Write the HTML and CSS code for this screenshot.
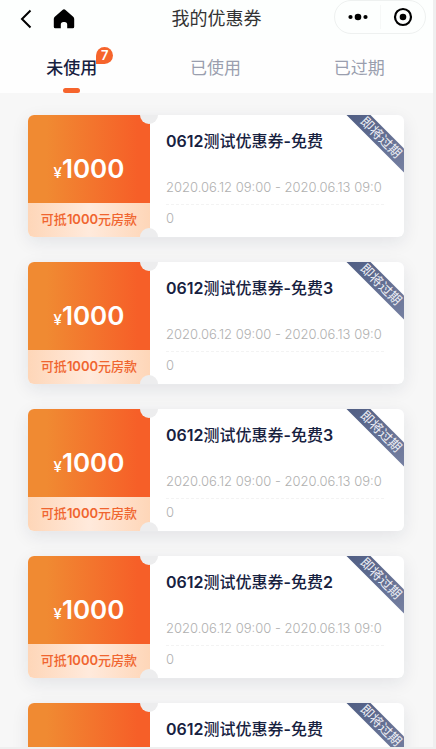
FILE: index.html
```html
<!DOCTYPE html>
<html lang="zh-CN">
<head>
<meta charset="utf-8">
<meta name="viewport" content="width=device-width, initial-scale=1">
<title>我的优惠券</title>
<link rel="stylesheet" href="styles.css">
</head>
<body>
<div class="app">
  <header class="bar">
    <div class="bar-side">
      <button class="icon-btn" type="button" aria-label="返回">
        <svg width="12" height="20" viewBox="0 0 12 20" fill="none" stroke="#000" stroke-width="2"><path d="M10.500 1.500 2 10l8.500 8.500"/></svg>
      </button>
      <button class="icon-btn" type="button" aria-label="首页">
        <svg width="22" height="20" viewBox="0 0 22 20"><path d="M9.500 1a2.200 2.200 0 0 1 3 0l7.700 6.800c.7.6 1 1.300 1 2.200v7.700a1.500 1.500 0 0 1-1.500 1.500h-5.500v-3.600a2.700 2.700 0 0 0-2.700-2.700h-1a2.700 2.700 0 0 0-2.700 2.700v3.600H2.300a1.500 1.500 0 0 1-1.500-1.500V10c0-.9.300-1.600 1-2.200z"/></svg>
      </button>
    </div>
    <h1 class="bar-title">我的优惠券</h1>
    <div class="bar-side bar-end">
      <div class="capsule">
        <button class="icon-btn capsule-btn" type="button" aria-label="更多">
          <svg width="20" height="8" viewBox="0 0 20 8"><circle cx="2.500" cy="4" r="2.100"/><circle cx="10" cy="4" r="3.300"/><circle cx="17.500" cy="4" r="2.100"/></svg>
        </button>
        <button class="icon-btn capsule-btn" type="button" aria-label="关闭">
          <svg width="20" height="20" viewBox="0 0 20 20"><circle cx="10" cy="10" r="8" fill="none" stroke="#000" stroke-width="2.200"/><circle cx="10" cy="10" r="3.300"/></svg>
        </button>
      </div>
    </div>
  </header>
  <nav class="tabs">
    <a class="tab active" href="#unused"><span class="tab-label">未使用<span class="badge">7</span></span></a>
    <a class="tab" href="#used"><span class="tab-label">已使用</span></a>
    <a class="tab" href="#expired"><span class="tab-label">已过期</span></a>
  </nav>
  <main class="list">
    <article class="coupon">
      <div class="value">
        <p class="amount"><span class="yen">¥</span>1000</p>
        <p class="usage">可抵<b>1000</b>元房款</p>
      </div>
      <div class="info">
        <h2 class="name"><b>0612</b>测试优惠券<b>-</b>免费</h2>
        <p class="date">2020.06.12 09:00 - 2020.06.13 09:0</p>
        <p class="note">0</p>
      </div>
      <span class="ribbon">即将过期</span>
    </article>
    <article class="coupon">
      <div class="value">
        <p class="amount"><span class="yen">¥</span>1000</p>
        <p class="usage">可抵<b>1000</b>元房款</p>
      </div>
      <div class="info">
        <h2 class="name"><b>0612</b>测试优惠券<b>-</b>免费<b>3</b></h2>
        <p class="date">2020.06.12 09:00 - 2020.06.13 09:0</p>
        <p class="note">0</p>
      </div>
      <span class="ribbon">即将过期</span>
    </article>
    <article class="coupon">
      <div class="value">
        <p class="amount"><span class="yen">¥</span>1000</p>
        <p class="usage">可抵<b>1000</b>元房款</p>
      </div>
      <div class="info">
        <h2 class="name"><b>0612</b>测试优惠券<b>-</b>免费<b>3</b></h2>
        <p class="date">2020.06.12 09:00 - 2020.06.13 09:0</p>
        <p class="note">0</p>
      </div>
      <span class="ribbon">即将过期</span>
    </article>
    <article class="coupon">
      <div class="value">
        <p class="amount"><span class="yen">¥</span>1000</p>
        <p class="usage">可抵<b>1000</b>元房款</p>
      </div>
      <div class="info">
        <h2 class="name"><b>0612</b>测试优惠券<b>-</b>免费<b>2</b></h2>
        <p class="date">2020.06.12 09:00 - 2020.06.13 09:0</p>
        <p class="note">0</p>
      </div>
      <span class="ribbon">即将过期</span>
    </article>
    <article class="coupon">
      <div class="value">
        <p class="amount"><span class="yen">¥</span>1000</p>
        <p class="usage">可抵<b>1000</b>元房款</p>
      </div>
      <div class="info">
        <h2 class="name"><b>0612</b>测试优惠券<b>-</b>免费</h2>
        <p class="date">2020.06.12 09:00 - 2020.06.13 09:0</p>
        <p class="note">0</p>
      </div>
      <span class="ribbon">即将过期</span>
    </article>
  </main>
</div>
</body>
</html>
```
FILE: styles.css
```css
* {
  box-sizing: border-box;
}

body,
h1,
h2,
p {
  margin: 0;
}

body {
  font-family: Inter, "Noto Sans CJK SC", sans-serif;
  background: #efefef;
}

.app {
  display: flex;
  flex-direction: column;
  height: 100vh;
  border: solid #efefef;
  border-width: 0 3px 2px 0;
  background: #f7f7f7;
}

/* Title bar */
.bar {
  display: flex;
  align-items: center;
  height: 40px;
  padding: 0 20px 2px;
  background: #fdfffe;
}

.bar-side {
  display: flex;
  flex: 1;
  align-items: center;
  gap: 21px;
}

.bar-end {
  justify-content: flex-end;
  align-self: flex-start;
}

.bar-title {
  font-size: 18px;
  font-weight: 400;
  line-height: 24px;
  color: #333;
}

.icon-btn {
  display: flex;
  align-items: center;
  justify-content: center;
  padding: 0;
  border: 0;
  background: none;
}

.capsule {
  display: flex;
  align-items: center;
  height: 34px;
  margin-right: -13px;
  border: 1px solid #eef1f0;
  border-radius: 17px;
}

.capsule-btn {
  width: 45px;
  height: 24px;
}

.capsule-btn + .capsule-btn {
  border-left: 1px solid #f6f8f7;
}

/* Tabs */
.tabs {
  display: flex;
  flex: none;
  height: 53px;
  padding-right: 2px;
  background: #fefefe;
}

.tab {
  display: flex;
  flex: 1;
  flex-direction: column;
  align-items: center;
  justify-content: space-between;
  padding-top: 16px;
  font-size: 17px;
  line-height: 24px;
  color: #9a9eae;
  text-decoration: none;
}

.tab-label {
  position: relative;
}

.tab.active {
  font-weight: 500;
  color: #17213f;
}

.tab.active::after {
  width: 17px;
  height: 5px;
  border-radius: 3px;
  background: #f6642c;
  content: "";
}

.badge {
  position: absolute;
  top: -9px;
  left: 50px;
  width: 17px;
  height: 17px;
  border-radius: 9px 9px 9px 0;
  background: #f6642c;
  color: #fff;
  font-size: 13px;
  font-weight: 600;
  line-height: 17px;
  text-align: center;
}

/* Coupons */
.list {
  display: flex;
  flex: 1;
  flex-direction: column;
  gap: 25px;
  min-height: 0;
  padding: 22px 29px 22px 28px;
  overflow-y: auto;
  scrollbar-width: none;
}

.coupon {
  position: relative;
  display: flex;
  flex: none;
  height: 122px;
  border-radius: 6px;
  background: #fff;
  box-shadow: 0 5px 18px rgba(23, 33, 63, 0.09);
  overflow: hidden;
}

.coupon::before,
.coupon::after {
  position: absolute;
  left: 112px;
  width: 18px;
  height: 18px;
  border-radius: 50%;
  background: #ededee;
  content: "";
}

.coupon::before {
  top: -9px;
}

.coupon::after {
  bottom: -9px;
}

.value {
  display: flex;
  flex: none;
  flex-direction: column;
  width: 122px;
  text-align: center;
}

.amount {
  flex: 1;
  padding-top: 38px;
  background: linear-gradient(90deg, #f08a32 15%, #f65f28 90%);
  color: #fff;
  font-size: 26px;
  font-weight: 600;
  line-height: 32px;
}

.yen {
  font-size: 15px;
  font-weight: 500;
}

.usage {
  height: 34px;
  background: linear-gradient(90deg, #fed6b8, #ffeadc 50%, #fed6b8);
  color: #f0652f;
  font-size: 13px;
  font-weight: 500;
  line-height: 32px;
  white-space: nowrap;
}

.usage b {
  font-weight: 600;
}

.info {
  display: flex;
  flex: 1;
  flex-direction: column;
  min-width: 0;
  padding: 14px 20px 0 16px;
}

.name {
  color: #17213f;
  font-size: 16px;
  font-weight: 500;
  line-height: 24px;
  white-space: nowrap;
}

.name b {
  font-weight: 600;
}

.date {
  margin-top: 24px;
  padding-bottom: 7px;
  border-bottom: 1px dashed #f3f3f3;
  color: #b0b0b0;
  font-size: 13px;
  font-weight: 300;
  line-height: 20px;
  white-space: nowrap;
}

.note {
  padding-top: 3px;
  color: #b0b0b0;
  font-size: 13px;
  font-weight: 300;
  line-height: 20px;
}

.ribbon {
  position: absolute;
  top: 14px;
  right: -27px;
  width: 100px;
  height: 17px;
  background: linear-gradient(90deg, #4c5a80, #7983a4);
  color: #eef0f6;
  font-size: 13px;
  line-height: 17px;
  text-align: center;
  transform: rotate(45deg);
}
```
